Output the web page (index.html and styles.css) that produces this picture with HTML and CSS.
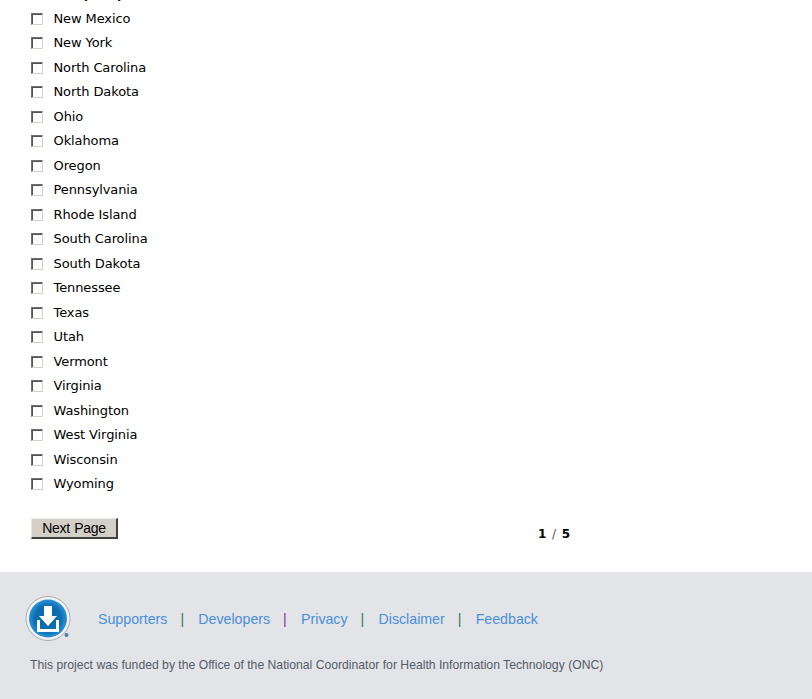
FILE: index.html
```html
<!DOCTYPE html>
<html lang="en">
<head>
<meta charset="utf-8">
<title>States</title>
<link rel="stylesheet" href="styles.css">
</head>
<body>
<main class="content">
  <ul class="states">
    <li class="state"><span class="box"></span><span>New Jersey</span></li>
    <li class="state"><span class="box"></span><span>New Mexico</span></li>
    <li class="state"><span class="box"></span><span>New York</span></li>
    <li class="state"><span class="box"></span><span>North Carolina</span></li>
    <li class="state"><span class="box"></span><span>North Dakota</span></li>
    <li class="state"><span class="box"></span><span>Ohio</span></li>
    <li class="state"><span class="box"></span><span>Oklahoma</span></li>
    <li class="state"><span class="box"></span><span>Oregon</span></li>
    <li class="state"><span class="box"></span><span>Pennsylvania</span></li>
    <li class="state"><span class="box"></span><span>Rhode Island</span></li>
    <li class="state"><span class="box"></span><span>South Carolina</span></li>
    <li class="state"><span class="box"></span><span>South Dakota</span></li>
    <li class="state"><span class="box"></span><span>Tennessee</span></li>
    <li class="state"><span class="box"></span><span>Texas</span></li>
    <li class="state"><span class="box"></span><span>Utah</span></li>
    <li class="state"><span class="box"></span><span>Vermont</span></li>
    <li class="state"><span class="box"></span><span>Virginia</span></li>
    <li class="state"><span class="box"></span><span>Washington</span></li>
    <li class="state"><span class="box"></span><span>West Virginia</span></li>
    <li class="state"><span class="box"></span><span>Wisconsin</span></li>
    <li class="state"><span class="box"></span><span>Wyoming</span></li>
  </ul>
  <div class="pager">
    <button class="next" type="button">Next Page</button>
    <div class="count"><b>1</b><span class="slash">/</span><b>5</b></div>
  </div>
</main>
<footer class="footer">
  <div class="footer-top">
    <svg class="logo" width="46" height="48" viewBox="0 0 46 48" aria-hidden="true">
      <defs>
        <radialGradient id="disc" cx="50%" cy="50%" r="50%">
          <stop offset="0%" stop-color="#0a66a8"/>
          <stop offset="70%" stop-color="#0c6fb3"/>
          <stop offset="100%" stop-color="#2a93d6"/>
        </radialGradient>
      </defs>
      <circle cx="23" cy="22.500" r="22" fill="#f1f2f3" stroke="#a9abae" stroke-width="1"/>
      <circle cx="23" cy="22.500" r="19" fill="url(#disc)"/>
      <path d="M19 10h8v10h5l-9 10-9-10h5z" fill="#fff"/>
      <path d="M12 24h3v9h16v-9h3v12h-22z" fill="#fff"/>
      <circle cx="41.500" cy="39" r="2" fill="#4d7fa6"/>
    </svg>
    <nav class="links">
      <a class="link">Supporters</a><span class="sep green">|</span>
      <a class="link">Developers</a><span class="sep purple">|</span>
      <a class="link">Privacy</a><span class="sep green">|</span>
      <a class="link">Disclaimer</a><span class="sep green">|</span>
      <a class="link">Feedback</a>
    </nav>
  </div>
  <p class="funding">This project was funded by the Office of the National Coordinator for Health Information Technology (ONC)</p>
</footer>
</body>
</html>
```
FILE: styles.css
```css
* { box-sizing: border-box; }
html, body { margin: 0; padding: 0; }
body {
  height: 699px;
  overflow: hidden;
  background: #fff;
  display: flex;
  flex-direction: column;
  font-family: "Liberation Sans", Arial, sans-serif;
}
.content {
  height: 572px;
  flex: none;
  overflow: hidden;
  padding-left: 31px;
}
.states {
  list-style: none;
  margin: -18px 0 0;
  padding: 0;
}
.state {
  display: flex;
  align-items: center;
  height: 24.5px;
  font: 13px/24px "DejaVu Sans", Verdana, sans-serif;
  letter-spacing: -0.1px;
  color: #000;
}
.box {
  flex: none;
  width: 12px;
  height: 12px;
  margin-right: 10.500px;
  background: #fff;
  border: 1px solid;
  border-color: #6f6f6f #d4d0c8 #d4d0c8 #6f6f6f;
  box-shadow: inset 1px 1px 0 #555;
}
.pager {
  display: flex;
  align-items: flex-start;
  margin-top: 21px;
}
.next {
  width: 87px;
  height: 21px;
  padding: 0;
  background: #d4d0c8;
  border: 1px solid;
  border-color: #ece9e2 #404040 #404040 #ece9e2;
  border-width: 1px 2px 2px 1px;
  font: 14px "Liberation Sans", Arial, sans-serif;
  letter-spacing: -0.3px;
  word-spacing: 1px;
  color: #000;
}
.count {
  margin-left: 420px;
  margin-top: 8px;
  display: flex;
  gap: 6px;
  font: 12px/16px "DejaVu Sans", Verdana, sans-serif;
  letter-spacing: -0.3px;
  color: #000;
}
.slash { color: #555; font-size: 12px; }
.footer {
  flex: 1;
  background: #e2e4e8;
  padding: 25px 0 0 25px;
}
.footer-top {
  display: flex;
  align-items: center;
  height: 46px;
}
.logo { flex: none; }
.links {
  margin-left: 27px;
  margin-bottom: 2px;
  font-size: 14.200px;
  white-space: nowrap;
}
.link { color: #4a8fd8; }
.sep { margin: 0 10.300px 0 13px; }
.green { color: #3d7a4a; }
.purple { color: #7b3f98; }
.funding {
  margin: 14px 0 0 5px;
  font-size: 12.200px;
  line-height: 16px;
  color: #555b66;
  white-space: nowrap;
}
```
